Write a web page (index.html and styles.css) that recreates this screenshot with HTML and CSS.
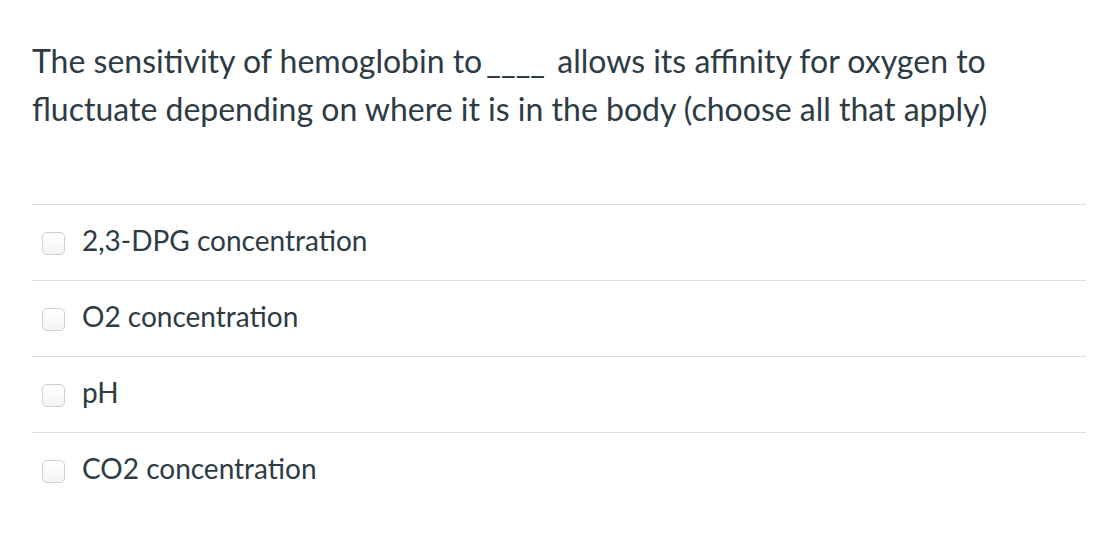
FILE: index.html
```html
<!DOCTYPE html>
<html>
<head>
<meta charset="utf-8">
<link rel="stylesheet" href="styles.css">
</head>
<body>
<div class="question">
  <div class="question-text">The sensitivity of hemoglobin to<span class="blank">____</span> allows its affinity for oxygen to fluctuate depending on where it is in the body (choose all that apply)</div>
  <div class="answers">
    <label class="answer"><span class="box"></span><span class="label">2,3-DPG concentration</span></label>
    <label class="answer"><span class="box"></span><span class="label">O2 concentration</span></label>
    <label class="answer"><span class="box"></span><span class="label">pH</span></label>
    <label class="answer"><span class="box"></span><span class="label">CO2 concentration</span></label>
  </div>
</div>
</body>
</html>
```
FILE: styles.css
```css
html, body {
  margin: 0;
  padding: 0;
  background: #fff;
}
body {
  font-family: Lato, "Liberation Sans", sans-serif;
  color: #2d3b45;
}
.question {
  width: 1054px;
  padding: 37px 0 0 32px;
}
.question-text {
  font-size: 32px;
  line-height: 48px;
  padding-right: 40px;
}
.blank {
  margin-left: 4px;
  margin-right: 4px;
}
.answers {
  margin-top: 71px;
}
.answer {
  display: flex;
  align-items: center;
  gap: 17px;
  height: 75px;
  border-top: 1px solid #dcdcdc;
  padding-left: 10px;
  font-size: 28px;
}
.box {
  width: 21px;
  height: 21px;
  border: 1px solid #cfcfcf;
  border-radius: 5px;
  background: linear-gradient(#fff, #f4f4f4);
  box-sizing: content-box;
  margin-top: 2px;
}
.label {
  line-height: 1;
  margin-bottom: 6px;
}
```
